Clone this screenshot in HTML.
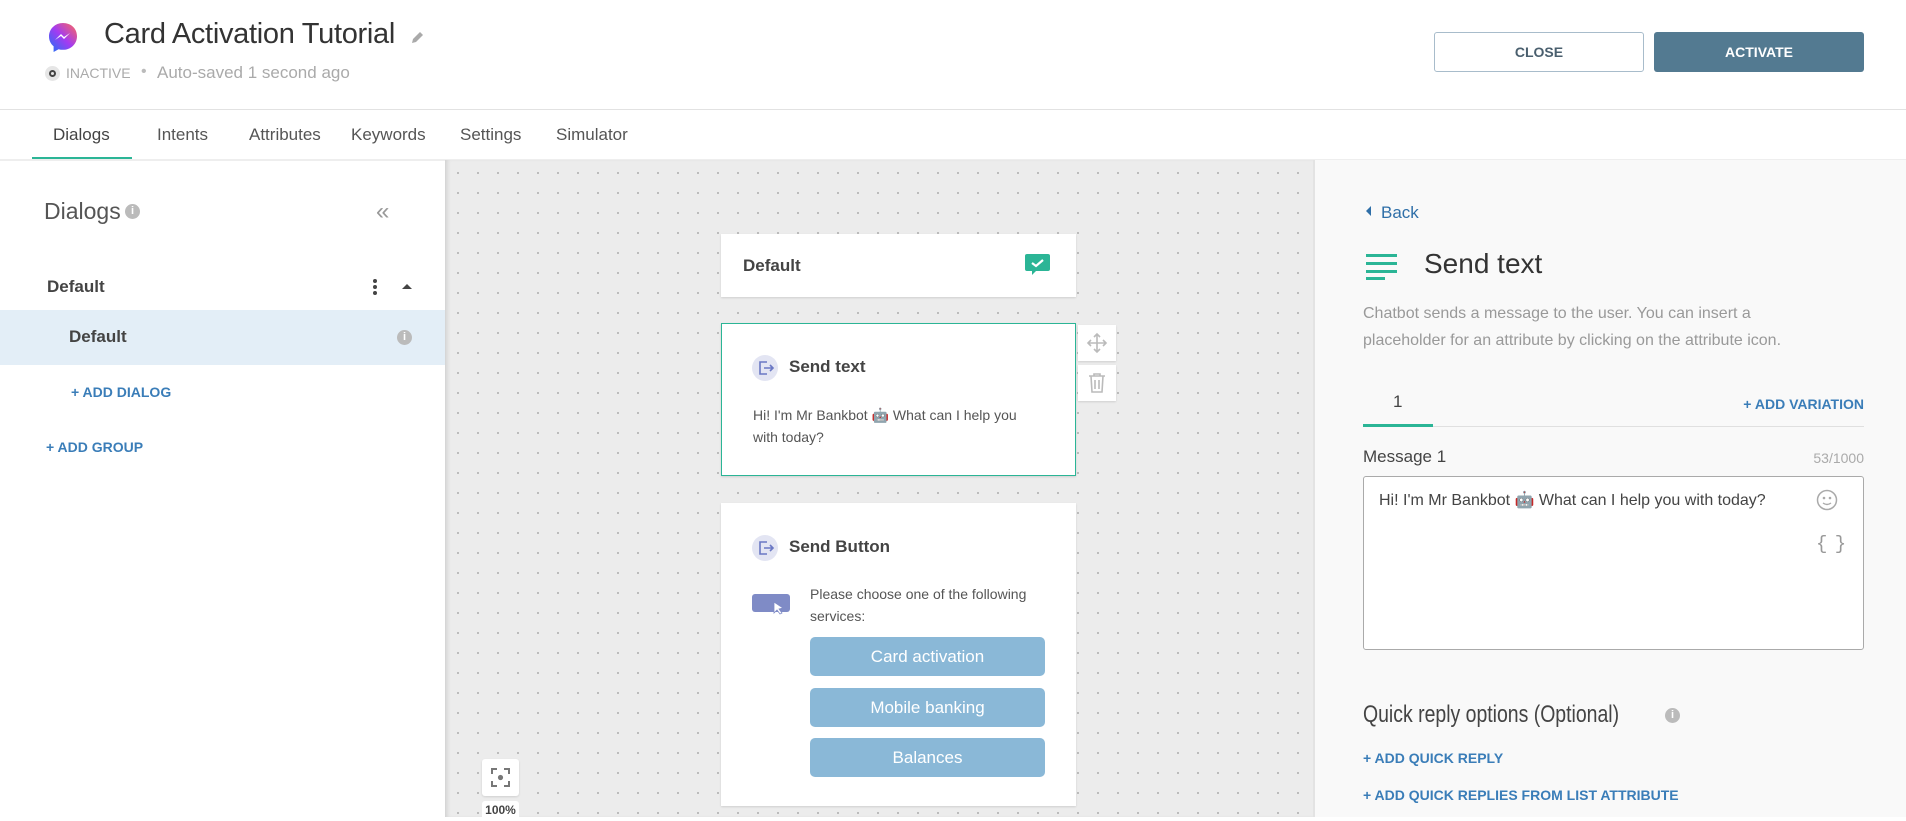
<!DOCTYPE html>
<html><head><meta charset="utf-8"><style>
*{box-sizing:border-box;margin:0;padding:0}
body{width:1906px;height:817px;overflow:hidden;position:relative;background:#fff;font-family:"Liberation Sans",Arial,sans-serif;color:#333}
.a{position:absolute;white-space:nowrap}
.blue{color:#3a7db8;font-weight:bold;font-size:14px}
.canvas{position:absolute;left:445px;top:160px;width:868px;height:657px;background-color:#ececec;background-image:radial-gradient(circle,#b5b5b5 0.9px,transparent 1.2px);background-size:20px 20px;background-position:3px 3px;box-shadow:inset 4px 0 4px -2px rgba(0,0,0,.12)}
.card{position:absolute;background:#fff;box-shadow:0 1px 2px rgba(0,0,0,.12)}
.qb{position:absolute;left:810px;width:235px;height:39px;background:#8ab8d7;border-radius:5px;color:#fff;font-size:17px;text-align:center;line-height:39px}
.ico{position:absolute;width:26px;height:26px;border-radius:50%;background:#e3e5f3}
</style></head><body>

<!-- header -->
<svg class="a" style="left:48px;top:22px" width="30" height="31" viewBox="0 0 30 31">
<defs><linearGradient id="g" x1="0" y1="1" x2="1" y2="0"><stop offset="0" stop-color="#1b74f5"/><stop offset=".5" stop-color="#a33bf2"/><stop offset="1" stop-color="#ff6a5a"/></linearGradient></defs>
<path d="M15 1C7 1 1 7 1 14.5c0 4 1.8 7.5 4.6 9.8V30l5-2.8c1.4.4 2.9.6 4.4.6 8 0 14-6 14-13.6S23 1 15 1z" fill="url(#g)"/>
<path d="M7 18l6-6 3 3 6-4-6 6-3-3z" fill="#fff"/></svg>
<div class="a" style="left:104px;top:18px;font-size:29px;color:#333;letter-spacing:-0.3px">Card Activation Tutorial</div>
<svg class="a" style="left:410px;top:30px" width="15" height="15" viewBox="0 0 15 15"><path d="M2 13l1-4 7-7 3 3-7 7z" fill="#aaa"/></svg>
<div class="a" style="left:45px;top:66px;width:15px;height:15px;border-radius:50%;background:#e6e6e6"></div>
<div class="a" style="left:49px;top:70px;width:7px;height:7px;border-radius:50%;border:2px solid #444"></div>
<div class="a" style="left:66px;top:65px;font-size:14px;color:#aaa">INACTIVE</div>
<div class="a" style="left:141px;top:63px;font-size:16px;color:#bbb">•</div>
<div class="a" style="left:157px;top:63px;font-size:17px;color:#aaa">Auto-saved 1 second ago</div>
<div class="a" style="left:1434px;top:32px;width:210px;height:40px;border:1px solid #a8bccb;border-radius:3px;text-align:center;line-height:38px;font-size:14px;font-weight:bold;color:#4a5f6e">CLOSE</div>
<div class="a" style="left:1654px;top:32px;width:210px;height:40px;background:#537a91;border-radius:3px;text-align:center;line-height:40px;font-size:14px;font-weight:bold;color:#fff">ACTIVATE</div>
<div class="a" style="left:0;top:109px;width:1906px;height:1px;background:#e2e2e2"></div>
<div class="a" style="top:125px;left:53px;font-size:17px;color:#444">Dialogs</div>
<div class="a" style="top:125px;left:157px;font-size:17px;color:#555">Intents</div>
<div class="a" style="top:125px;left:249px;font-size:17px;color:#555">Attributes</div>
<div class="a" style="top:125px;left:351px;font-size:17px;color:#555">Keywords</div>
<div class="a" style="top:125px;left:460px;font-size:17px;color:#555">Settings</div>
<div class="a" style="top:125px;left:556px;font-size:17px;color:#555">Simulator</div>
<div class="a" style="left:32px;top:157px;width:100px;height:3px;background:#2bb596"></div>
<div class="a" style="left:0;top:159px;width:1906px;height:2px;background:#eee"></div>

<!-- left panel -->
<div class="a" style="left:44px;top:198px;font-size:23px;color:#555">Dialogs</div>
<div class="a" style="left:125px;top:204px;width:15px;height:15px;border-radius:50%;background:#bbb;color:#fff;font-size:11px;font-weight:bold;text-align:center;line-height:15px">i</div>
<div class="a" style="left:376px;top:198px;font-size:24px;color:#999">«</div>
<div class="a" style="left:47px;top:277px;font-size:17px;font-weight:bold;color:#444">Default</div>
<div class="a" style="left:373px;top:279px;width:4px;height:4px;border-radius:50%;background:#444;box-shadow:0 6px 0 #444,0 12px 0 #444"></div>
<div class="a" style="left:402px;top:284px;width:0;height:0;border-left:5px solid transparent;border-right:5px solid transparent;border-bottom:5px solid #444"></div>
<div class="a" style="left:0;top:310px;width:445px;height:55px;background:#e3eef7"></div>
<div class="a" style="left:69px;top:327px;font-size:17px;font-weight:bold;color:#444">Default</div>
<div class="a" style="left:397px;top:330px;width:15px;height:15px;border-radius:50%;background:#bbb;color:#fff;font-size:11px;font-weight:bold;text-align:center;line-height:15px">i</div>
<div class="a blue" style="left:71px;top:384px">+ ADD DIALOG</div>
<div class="a blue" style="left:46px;top:439px">+ ADD GROUP</div>

<!-- canvas -->
<div class="canvas"></div>
<div class="card" style="left:721px;top:234px;width:355px;height:63px"></div>
<div class="a" style="left:743px;top:256px;font-size:17px;font-weight:bold;color:#444">Default</div>
<svg class="a" style="left:1025px;top:254px" width="25" height="22" viewBox="0 0 25 22"><path d="M2 0h21a2 2 0 0 1 2 2v13a2 2 0 0 1-2 2H11l-4 4v-4H2a2 2 0 0 1-2-2V2a2 2 0 0 1 2-2z" fill="#2bb596"/><path d="M7 9l4 3 7-6" stroke="#fff" stroke-width="2.2" fill="none"/></svg>

<div class="card" style="left:721px;top:323px;width:355px;height:153px;border:1.5px solid #2bb596"></div>
<div class="ico" style="left:752px;top:355px"></div>
<svg class="a" style="left:757px;top:359px" width="18" height="18" viewBox="0 0 18 18"><path d="M10 3H3v12h7M7 9h9M13 6l3 3-3 3" stroke="#6a78c4" stroke-width="1.6" fill="none"/></svg>
<div class="a" style="left:789px;top:357px;font-size:17px;font-weight:bold;color:#444">Send text</div>
<div class="a" style="left:753px;top:404px;font-size:14px;color:#555;line-height:22px">Hi! I'm Mr Bankbot 🤖 What can I help you<br>with today?</div>
<div class="card" style="left:1078px;top:325px;width:38px;height:36px"></div>
<svg class="a" style="left:1086px;top:332px" width="22" height="22" viewBox="0 0 22 22"><path d="M11 2v18M2 11h18M8 5l3-3 3 3M8 17l3 3 3-3M5 8l-3 3 3 3M17 8l3 3-3 3" stroke="#bbb" stroke-width="1.6" fill="none"/></svg>
<div class="card" style="left:1078px;top:365px;width:38px;height:36px"></div>
<svg class="a" style="left:1087px;top:372px" width="20" height="22" viewBox="0 0 20 22"><path d="M2 4h16M7 4V2h6v2M4 4l1 16h10l1-16M8 8v9M12 8v9" stroke="#bbb" stroke-width="1.6" fill="none"/></svg>

<div class="card" style="left:721px;top:503px;width:355px;height:303px"></div>
<div class="ico" style="left:752px;top:535px"></div>
<svg class="a" style="left:757px;top:539px" width="18" height="18" viewBox="0 0 18 18"><path d="M10 3H3v12h7M7 9h9M13 6l3 3-3 3" stroke="#6a78c4" stroke-width="1.6" fill="none"/></svg>
<div class="a" style="left:789px;top:537px;font-size:17px;font-weight:bold;color:#444">Send Button</div>
<div class="a" style="left:752px;top:594px;width:38px;height:18px;background:#7f8bc6;border-radius:3px"></div>
<svg class="a" style="left:773px;top:601px" width="12" height="14" viewBox="0 0 12 14"><path d="M1 1l9 6-4 1 3 4-2 1-3-4-3 3z" fill="#fff" stroke="#7f8bc6" stroke-width=".8"/></svg>
<div class="a" style="left:810px;top:583px;font-size:14px;color:#555;line-height:22px">Please choose one of the following<br>services:</div>
<div class="qb" style="top:637px">Card activation</div>
<div class="qb" style="top:688px">Mobile banking</div>
<div class="qb" style="top:738px">Balances</div>

<div class="card" style="left:482px;top:759px;width:37px;height:37px;border-radius:3px"></div>
<svg class="a" style="left:490px;top:767px" width="21" height="21" viewBox="0 0 21 21"><path d="M2 7V2h5M14 2h5v5M19 14v5h-5M7 19H2v-5" stroke="#777" stroke-width="2" fill="none"/><circle cx="10.5" cy="10.5" r="2.6" fill="#777"/></svg>
<div class="a" style="left:482px;top:801px;width:37px;height:20px;background:#fff;border-radius:3px;font-size:12px;color:#444;text-align:center;line-height:18px;font-weight:bold">100%</div>

<!-- right panel -->
<div class="a" style="left:1313px;top:160px;width:593px;height:657px;background:#f9f9f9;border-left:2px solid #e3e3e3"></div>
<div class="a" style="left:1366px;top:206px;width:0;height:0;border-top:5px solid transparent;border-bottom:5px solid transparent;border-right:5px solid #2f6fa8"></div>
<div class="a" style="left:1381px;top:203px;font-size:17px;color:#2f6fa8">Back</div>
<div class="a" style="left:1366px;top:254px;width:31px;height:3px;background:#2bb596;box-shadow:0 8px 0 #2bb596,0 16px 0 #2bb596"></div>
<div class="a" style="left:1366px;top:277px;width:19px;height:3px;background:#2bb596"></div>
<div class="a" style="left:1424px;top:248px;font-size:28px;color:#333">Send text</div>
<div class="a" style="left:1363px;top:300px;font-size:16px;color:#999;line-height:27px">Chatbot sends a message to the user. You can insert a<br>placeholder for an attribute by clicking on the attribute icon.</div>
<div class="a" style="left:1393px;top:392px;font-size:17px;color:#444">1</div>
<div class="a blue" style="right:42px;top:396px">+ ADD VARIATION</div>
<div class="a" style="left:1363px;top:426px;width:501px;height:1px;background:#e0e0e0"></div>
<div class="a" style="left:1363px;top:424px;width:70px;height:3px;background:#2bb596"></div>
<div class="a" style="left:1363px;top:447px;font-size:17px;color:#444">Message 1</div>
<div class="a" style="right:42px;top:450px;font-size:14px;color:#aaa">53/1000</div>
<div class="a" style="left:1363px;top:476px;width:501px;height:174px;background:#fff;border:1px solid #aaa;border-radius:3px"></div>
<div class="a" style="left:1379px;top:490px;font-size:16px;color:#444">Hi! I'm Mr Bankbot 🤖 What can I help you with today?</div>
<svg class="a" style="left:1816px;top:489px" width="22" height="22" viewBox="0 0 22 22"><circle cx="11" cy="11" r="9.5" stroke="#aaa" stroke-width="1.5" fill="none"/><circle cx="8" cy="9" r="1.3" fill="#aaa"/><circle cx="14" cy="9" r="1.3" fill="#aaa"/><path d="M7 14q4 3 8 0" stroke="#aaa" stroke-width="1.4" fill="none"/></svg>
<div class="a" style="left:1816px;top:533px;font-size:19px;color:#999;font-family:'Liberation Mono',monospace;letter-spacing:-2px">{ }</div>
<div class="a" style="left:1363px;top:701px;font-size:24px;color:#444;transform:scaleX(0.81);transform-origin:0 0">Quick reply options (Optional)</div>
<div class="a" style="left:1665px;top:708px;width:15px;height:15px;border-radius:50%;background:#bbb;color:#fff;font-size:11px;font-weight:bold;text-align:center;line-height:15px">i</div>
<div class="a blue" style="left:1363px;top:750px">+ ADD QUICK REPLY</div>
<div class="a blue" style="left:1363px;top:787px">+ ADD QUICK REPLIES FROM LIST ATTRIBUTE</div>
</body></html>
